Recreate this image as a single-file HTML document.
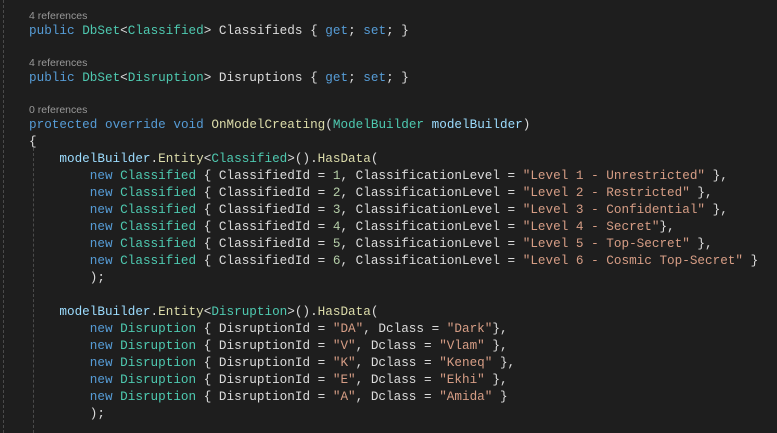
<!DOCTYPE html>
<html><head><style>
body{margin:0;width:777px;height:433px;background:#1e1e1e;overflow:hidden;position:relative}
.l{position:absolute;left:29px;white-space:pre;font-family:"Liberation Mono",monospace;font-size:12.66px;line-height:17px;height:17px;color:#dcdcdc}
.r{position:absolute;left:29px;font-family:"Liberation Sans",sans-serif;font-size:10.5px;color:#999;line-height:12px}
.k{color:#569cd6}.t{color:#4ec9b0}.s{color:#d69d85}.n{color:#b5cea8}.m{color:#dcdcaa}.v{color:#9cdcfe}
.g{position:absolute;width:0;border-left:1px dashed #4a4a4a}
</style></head><body>
<div class="g" style="left:3px;top:0;height:433px"></div>
<div class="g" style="left:33px;top:148px;height:285px"></div>
<div class="r" style="top:10px">4 references</div>
<div class="l" style="top:22px"><span class="k">public</span> <span class="t">DbSet</span>&lt;<span class="t">Classified</span>&gt; Classifieds { <span class="k">get</span>; <span class="k">set</span>; }</div>
<div class="r" style="top:57px">4 references</div>
<div class="l" style="top:69px"><span class="k">public</span> <span class="t">DbSet</span>&lt;<span class="t">Disruption</span>&gt; Disruptions { <span class="k">get</span>; <span class="k">set</span>; }</div>
<div class="r" style="top:104px">0 references</div>
<div class="l" style="top:116px"><span class="k">protected</span> <span class="k">override</span> <span class="k">void</span> <span class="m">OnModelCreating</span>(<span class="t">ModelBuilder</span> <span class="v">modelBuilder</span>)</div>
<div class="l" style="top:133px">{</div>
<div class="l" style="top:150px">    <span class="v">modelBuilder</span>.<span class="m">Entity</span>&lt;<span class="t">Classified</span>&gt;().<span class="m">HasData</span>(</div>
<div class="l" style="top:167px">        <span class="k">new</span> <span class="t">Classified</span> { ClassifiedId = <span class="n">1</span>, ClassificationLevel = <span class="s">"Level 1 - Unrestricted"</span> },</div>
<div class="l" style="top:184px">        <span class="k">new</span> <span class="t">Classified</span> { ClassifiedId = <span class="n">2</span>, ClassificationLevel = <span class="s">"Level 2 - Restricted"</span> },</div>
<div class="l" style="top:201px">        <span class="k">new</span> <span class="t">Classified</span> { ClassifiedId = <span class="n">3</span>, ClassificationLevel = <span class="s">"Level 3 - Confidential"</span> },</div>
<div class="l" style="top:218px">        <span class="k">new</span> <span class="t">Classified</span> { ClassifiedId = <span class="n">4</span>, ClassificationLevel = <span class="s">"Level 4 - Secret"</span>},</div>
<div class="l" style="top:235px">        <span class="k">new</span> <span class="t">Classified</span> { ClassifiedId = <span class="n">5</span>, ClassificationLevel = <span class="s">"Level 5 - Top-Secret"</span> },</div>
<div class="l" style="top:252px">        <span class="k">new</span> <span class="t">Classified</span> { ClassifiedId = <span class="n">6</span>, ClassificationLevel = <span class="s">"Level 6 - Cosmic Top-Secret"</span> }</div>
<div class="l" style="top:269px">        );</div>
<div class="l" style="top:303px">    <span class="v">modelBuilder</span>.<span class="m">Entity</span>&lt;<span class="t">Disruption</span>&gt;().<span class="m">HasData</span>(</div>
<div class="l" style="top:320px">        <span class="k">new</span> <span class="t">Disruption</span> { DisruptionId = <span class="s">"DA"</span>, Dclass = <span class="s">"Dark"</span>},</div>
<div class="l" style="top:337px">        <span class="k">new</span> <span class="t">Disruption</span> { DisruptionId = <span class="s">"V"</span>, Dclass = <span class="s">"Vlam"</span> },</div>
<div class="l" style="top:354px">        <span class="k">new</span> <span class="t">Disruption</span> { DisruptionId = <span class="s">"K"</span>, Dclass = <span class="s">"Keneq"</span> },</div>
<div class="l" style="top:371px">        <span class="k">new</span> <span class="t">Disruption</span> { DisruptionId = <span class="s">"E"</span>, Dclass = <span class="s">"Ekhi"</span> },</div>
<div class="l" style="top:388px">        <span class="k">new</span> <span class="t">Disruption</span> { DisruptionId = <span class="s">"A"</span>, Dclass = <span class="s">"Amida"</span> }</div>
<div class="l" style="top:405px">        );</div>
</body></html>
